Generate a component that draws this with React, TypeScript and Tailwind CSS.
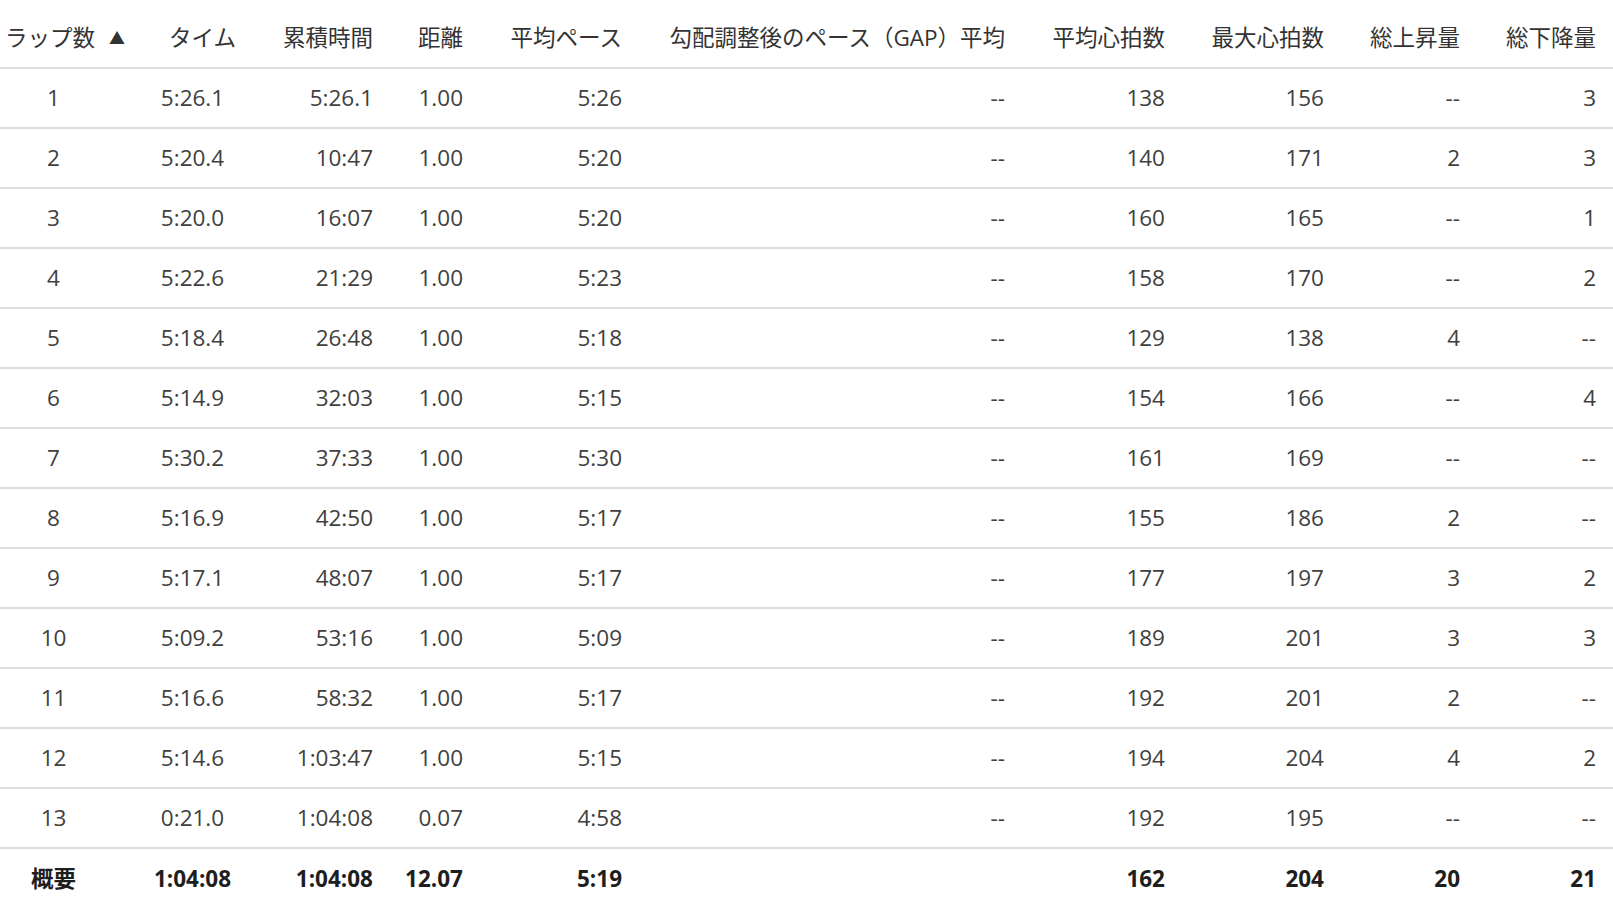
import React from 'react'

type Lap = [string, string, string, string, string, string, string, string, string, string]

const laps: Lap[] = [
  ['1', '5:26.1', '5:26.1', '1.00', '5:26', '--', '138', '156', '--', '3'],
  ['2', '5:20.4', '10:47', '1.00', '5:20', '--', '140', '171', '2', '3'],
  ['3', '5:20.0', '16:07', '1.00', '5:20', '--', '160', '165', '--', '1'],
  ['4', '5:22.6', '21:29', '1.00', '5:23', '--', '158', '170', '--', '2'],
  ['5', '5:18.4', '26:48', '1.00', '5:18', '--', '129', '138', '4', '--'],
  ['6', '5:14.9', '32:03', '1.00', '5:15', '--', '154', '166', '--', '4'],
  ['7', '5:30.2', '37:33', '1.00', '5:30', '--', '161', '169', '--', '--'],
  ['8', '5:16.9', '42:50', '1.00', '5:17', '--', '155', '186', '2', '--'],
  ['9', '5:17.1', '48:07', '1.00', '5:17', '--', '177', '197', '3', '2'],
  ['10', '5:09.2', '53:16', '1.00', '5:09', '--', '189', '201', '3', '3'],
  ['11', '5:16.6', '58:32', '1.00', '5:17', '--', '192', '201', '2', '--'],
  ['12', '5:14.6', '1:03:47', '1.00', '5:15', '--', '194', '204', '4', '2'],
  ['13', '0:21.0', '1:04:08', '0.07', '4:58', '--', '192', '195', '--', '--'],
]

const summary: Lap = ['概要', '1:04:08', '1:04:08', '12.07', '5:19', '', '162', '204', '20', '21']

const headers = [
  '累積時間',
  '距離',
  '平均ペース',
  '勾配調整後のペース（GAP）平均',
  '平均心拍数',
  '最大心拍数',
  '総上昇量',
]

const grid =
  'grid grid-cols-[148px_112px_136px_90px_159px_383px_160px_159px_136px_130px] items-center'

function Cells({ row }: { row: Lap }) {
  return (
    <>
      <div className="pr-[41px] text-center">{row[0]}</div>
      <div className="pr-[23px] text-center">{row[1]}</div>
      {row.slice(2, 9).map((v, i) => (
        <div key={i} className="pr-[23px] text-right">
          {v}
        </div>
      ))}
      <div className="pr-[17px] text-right">{row[9]}</div>
    </>
  )
}

export default function App() {
  return (
    <div
      className="w-[1613px] h-[909px] overflow-hidden bg-white text-[22.5px] leading-none"
      style={{ fontFamily: '"Open Sans", "Noto Sans CJK JP", sans-serif' }}
    >
      <div className={`${grid} h-[69px] pt-[9px] border-b-2 border-[#dedede] text-[#333]`}>
        <div className="flex items-center pl-[5px] whitespace-nowrap">
          <span>ラップ数</span>
          <span className="ml-[14px] text-[16px]">▲</span>
        </div>
        <div className="pr-[3px] text-center">タイム</div>
        {headers.map((h) => (
          <div key={h} className="pr-[23px] text-right whitespace-nowrap">
            {h}
          </div>
        ))}
        <div className="pr-[17px] text-right">総下降量</div>
      </div>

      {laps.map((row) => (
        <div key={row[0]} className={`${grid} h-[60px] pt-[1px] border-b-2 border-[#dedede] text-[#404040]`}>
          <Cells row={row} />
        </div>
      ))}

      <div className={`${grid} h-[60px] font-bold text-[#1e1e1e]`}>
        <Cells row={summary} />
      </div>
    </div>
  )
}
